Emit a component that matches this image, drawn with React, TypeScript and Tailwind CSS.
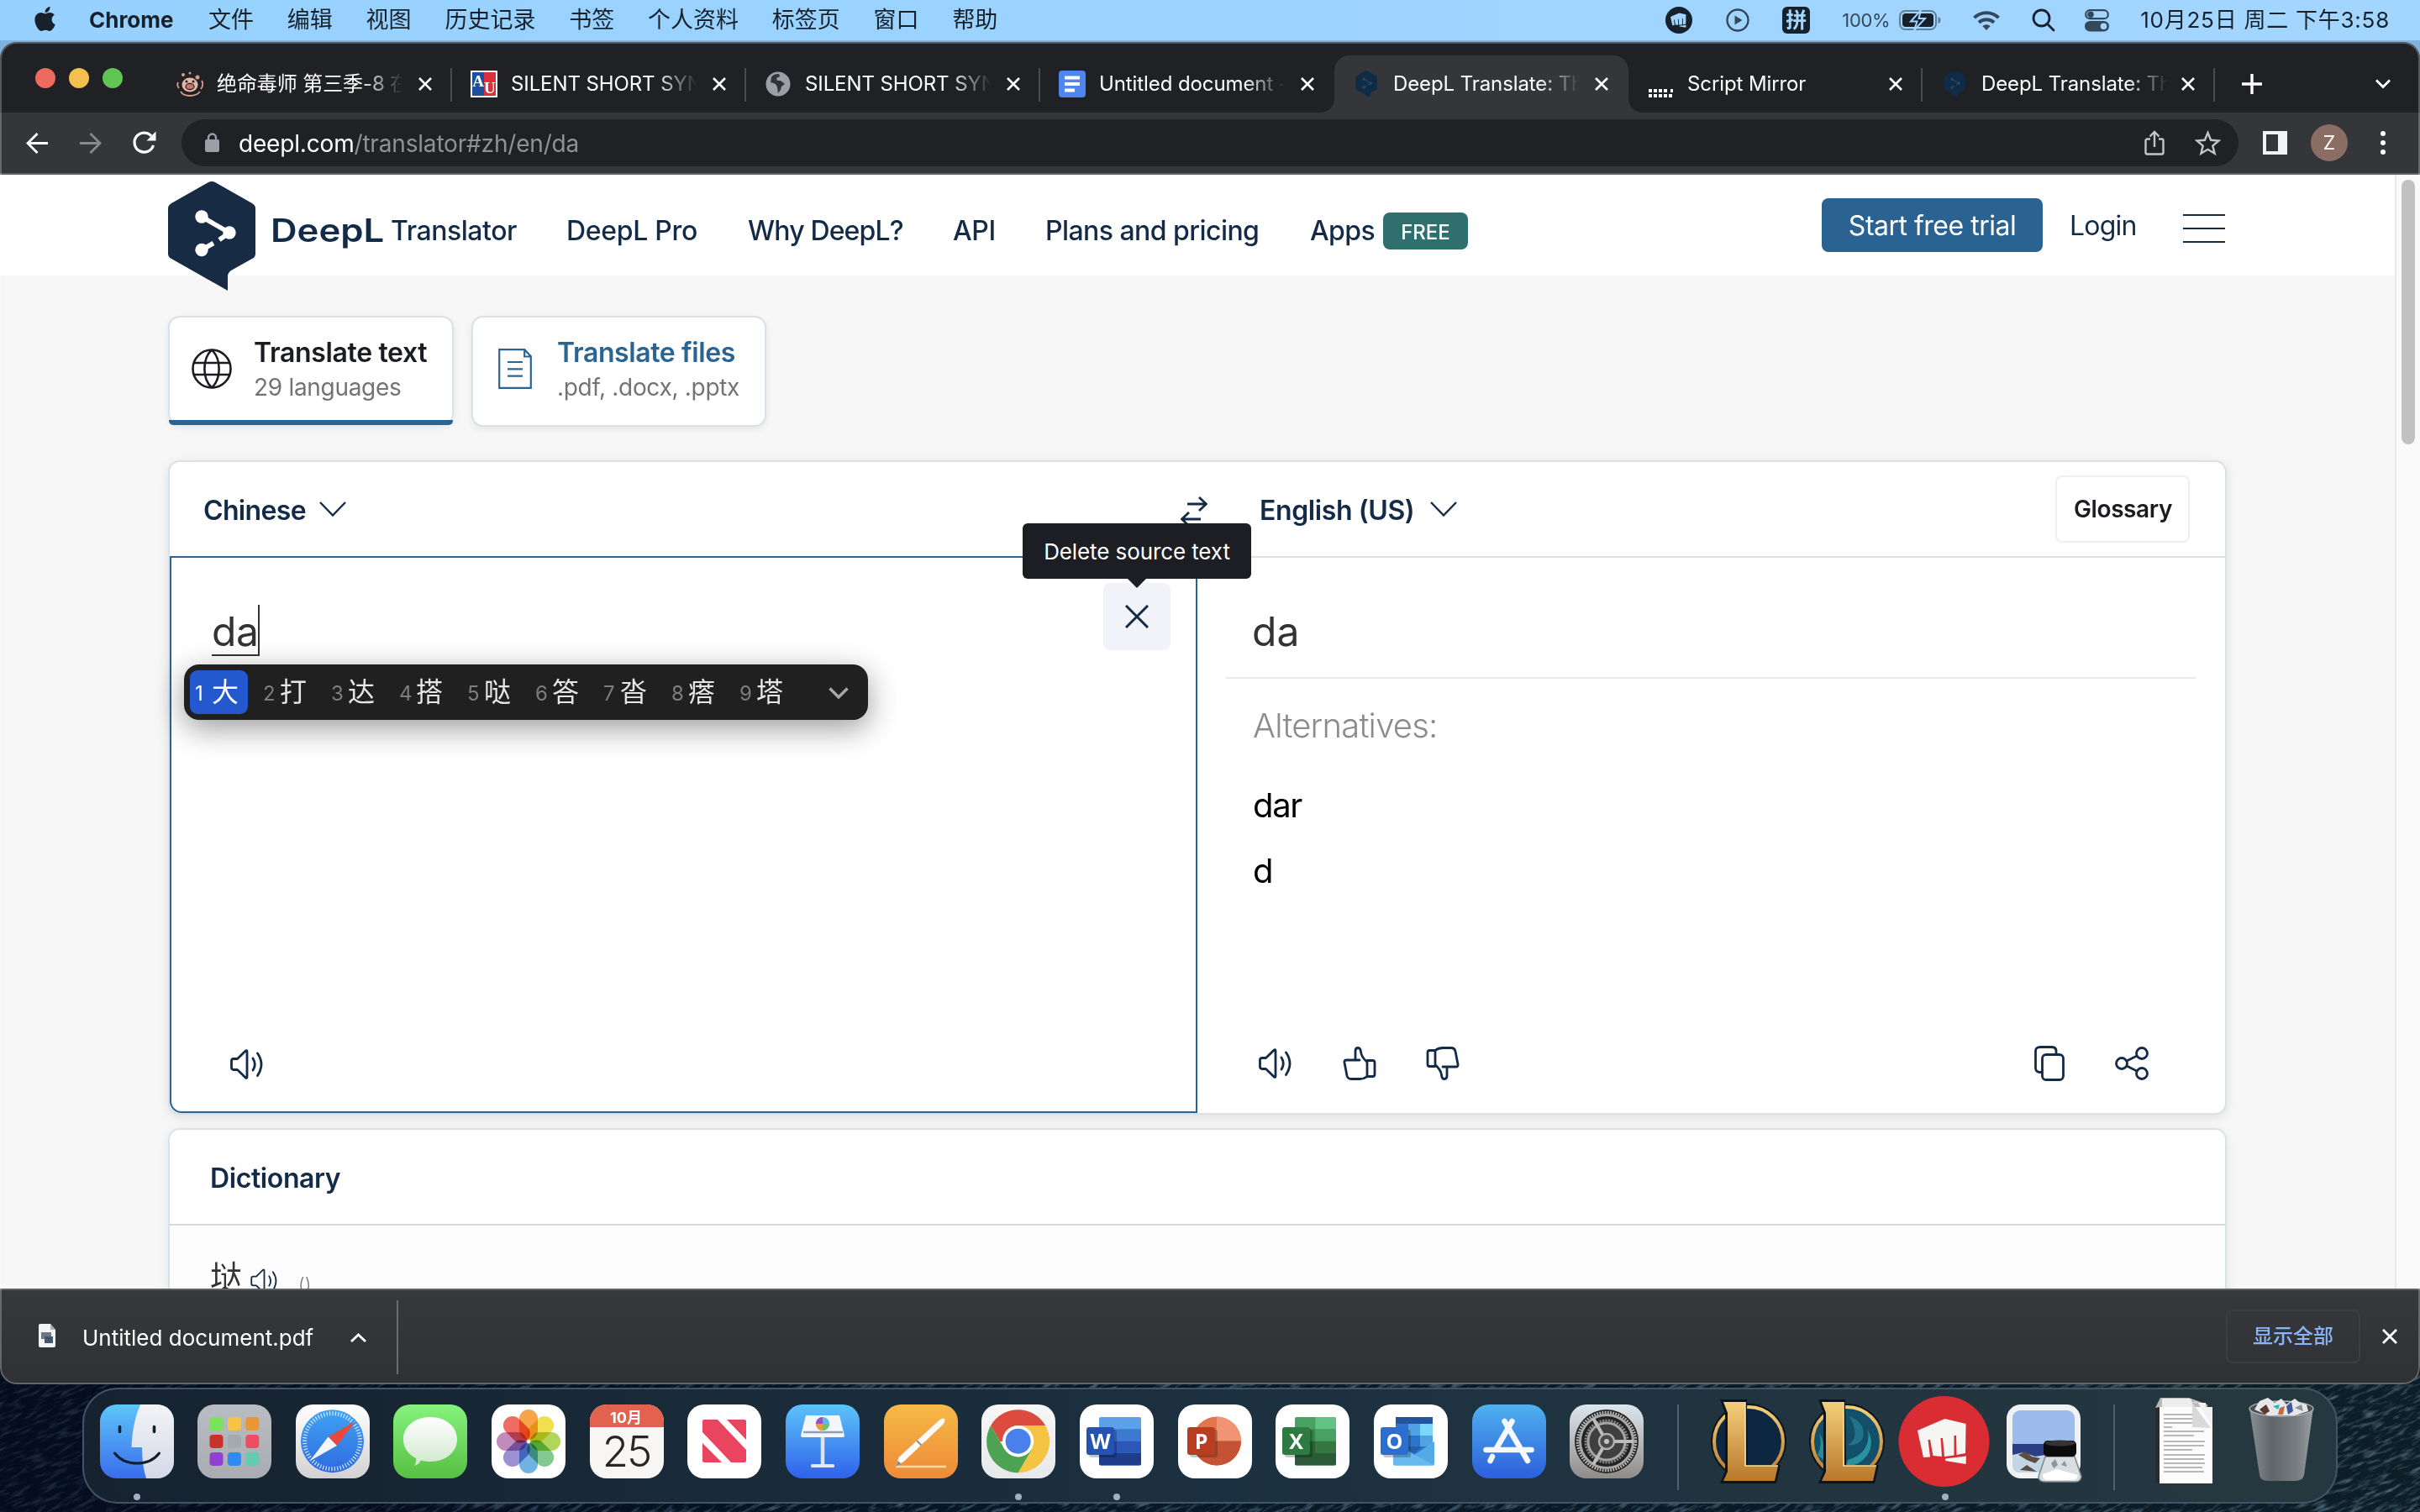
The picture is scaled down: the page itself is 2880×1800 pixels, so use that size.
import React from "react";
import { FaApple } from "react-icons/fa";

type Kids = { children?: React.ReactNode };

/* ---------- macOS menu bar ---------- */

const MENUS = ["文件", "编辑", "视图", "历史记录", "书签", "个人资料", "标签页", "窗口", "帮助"];

function FistShape({ fill }: { fill: string }) {
  return (
    <g fill={fill}>
      <path d="M11 31 L43.5 17 L68.6 23 L68 58 L57.5 60 L57 37 L54.5 37 L54.5 60.5 L43 62 L41 40 L38.5 40 L40 62 L29.5 61 L26 42 L23.5 42 L26 62.5 L18 63 Z" />
      <path d="M44 64.5 L69 61.5 L68.5 71 L44 67 Z" />
    </g>
  );
}

function MenuBar() {
  return (
    <div className="flex h-12 shrink-0 items-center bg-linear-to-r from-[#96d1ff] to-[#a3d6ff] text-[27px] leading-none whitespace-nowrap text-[#16212b]">
      <FaApple className="mb-1 ml-[37px] size-[33px]" />
      <span className="ml-[36px] w-[142px] text-[26px] font-bold">Chrome</span>
      <div className="mb-px flex gap-[39.800px]">
        {MENUS.map((m) => (
          <span key={m}>{m}</span>
        ))}
      </div>
      <div className="ml-auto flex items-center">
        <svg className="size-8" viewBox="0 0 32 32">
          <circle cx="16" cy="16" r="16" fill="#16212b" />
          <g transform="translate(2.5 2) scale(.32)"><FistShape fill="#a0d5ff" /></g>
        </svg>
        <svg className="ml-[40px] size-7" viewBox="0 0 28 28" fill="none" stroke="#33495b" strokeWidth="2.4">
          <circle cx="14" cy="14" r="12.5" />
          <path d="M10.500 8.500v11l9-5.500z" fill="#33495b" stroke="none" />
        </svg>
        <span className="ml-[39px] flex h-8 w-[33px] items-center justify-center rounded-[6px] bg-[#16212b] text-[25px] font-bold text-[#a3d6ff]">拼</span>
        <span className="ml-[38px] w-[68px] text-[22px] tracking-[-0.3px] text-[#33495b]">100%</span>
        <svg className="h-6 w-[50px]" viewBox="0 0 50 24">
          <rect x="1" y="1" width="43" height="22" rx="6.500" fill="none" stroke="#5f7f97" strokeWidth="2" />
          <rect x="4" y="4" width="37" height="16" rx="4" fill="#16212b" />
          <path d="M46.500 8q3 1 3 4t-3 4z" fill="#5f7f97" />
          <path d="M26 0L14 13.500h7.500L18 24L31 10h-7.500z" fill="#16212b" stroke="#a3d6ff" strokeWidth="2" />
        </svg>
        <svg className="ml-[38px] h-[25px] w-8" viewBox="0 0 32 25" fill="none" stroke="#33495b" strokeWidth="4">
          <path d="M1.500 9.200a20.500 20.500 0 0 1 29 0" />
          <path d="M7 14.800a13 13 0 0 1 18 0" />
          <path d="M16 24l-4.600-4.900a6.600 6.600 0 0 1 9.200 0z" fill="#33495b" stroke="none" />
        </svg>
        <svg className="ml-[38px] size-7" viewBox="0 0 28 28" fill="none" stroke="#16212b" strokeWidth="2.800">
          <circle cx="11.500" cy="11.500" r="9.500" />
          <path d="M18.500 18.500l7.500 7.500" strokeLinecap="round" />
        </svg>
        <svg className="ml-[35px] h-[27px] w-[29px]" viewBox="0 0 29 27">
          <rect x="1.200" y="1.200" width="26.600" height="10" rx="5" fill="none" stroke="#33495b" strokeWidth="2.200" />
          <circle cx="7" cy="6.200" r="3.800" fill="#33495b" />
          <rect x="0" y="14" width="29" height="12.500" rx="6.200" fill="#33495b" />
          <circle cx="22.500" cy="20.200" r="3.800" fill="#a3d6ff" />
        </svg>
        <span className="mr-[36px] ml-[37px] text-[26px] tracking-[0.75px]">10月25日 周二 下午3:58</span>
      </div>
    </div>
  );
}

/* ---------- Chrome tab strip ---------- */

function CloseIcon({ className = "" }: { className?: string }) {
  return (
    <svg className={"size-4 shrink-0 " + className} viewBox="0 0 16 16" stroke="currentColor" strokeWidth="2.600">
      <path d="M1 1l14 14M15 1L1 15" />
    </svg>
  );
}

const DEEPL_SHAPE = "M48 1Q52 -1 56 1L100 26Q104 28.500 104 32V86Q104 90 100 92L75 106Q71 109 71 113V130L4 92Q0 90 0 86V32Q0 28.500 4 26Z";

function DeepLMark({ className, fill, ink }: { className: string; fill: string; ink: string }) {
  return (
    <svg className={className} viewBox="0 0 104 130">
      <path d={DEEPL_SHAPE} fill={fill} />
      <path d="M40 42L73 61L61 69.500M54 73.500L40 81.500" stroke={ink} strokeWidth="5.500" fill="none" />
      <circle cx="40" cy="42" r="7.700" fill={ink} />
      <circle cx="73" cy="61" r="7.700" fill={ink} />
      <circle cx="40" cy="81.500" r="7.700" fill={ink} />
    </svg>
  );
}

const favicons: Record<string, React.ReactNode> = {
  pig: (
    <svg className="size-8" viewBox="0 0 32 32" fill="none" stroke="#d99b90" strokeWidth="1.800">
      <path d="M2 14q-2 4 1 7M30 12q3 5-1 10M5 25q3 5 11 5t12-5" />
      <ellipse cx="16" cy="17" rx="9.500" ry="8.500" fill="#e8b3a8" stroke="none" />
      <ellipse cx="16" cy="19" rx="5" ry="3.600" fill="#c47a72" stroke="#202124" strokeWidth="1.200" />
      <circle cx="12" cy="13" r="1.500" fill="#202124" stroke="none" />
      <circle cx="20" cy="13" r="1.500" fill="#202124" stroke="none" />
      <circle cx="8" cy="5" r="2" fill="#d99b90" stroke="none" />
      <circle cx="16" cy="3" r="1.500" fill="#d99b90" stroke="none" />
      <circle cx="25" cy="8" r="2.500" fill="#d99b90" stroke="none" />
    </svg>
  ),
  au: (
    <span className="flex size-8 items-center justify-center border-2 border-white bg-linear-to-r from-[#1d4f9f] from-50% to-[#dc2f3c] to-50% font-['Liberation_Serif'] font-bold text-white">
      <span className="mb-2 text-[19px] leading-none">A</span>
      <span className="mt-2 text-[19px] leading-none">U</span>
    </span>
  ),
  globe: (
    <svg className="size-8" viewBox="0 0 32 32">
      <circle cx="16" cy="16" r="14.500" fill="#9aa0a6" />
      <path d="M17 4q-7 0-9 4l-1 7 6 1 2 4 1 7 3-4 1-4 4-3-5-4h-4l-1-3 4-2z" fill="#202124" opacity=".85" />
      <path d="M4 15q5-2 8 1t3 6-4 3-7-10z" fill="#9aa0a6" />
    </svg>
  ),
  docs: (
    <svg className="size-8" viewBox="0 0 32 32">
      <rect width="32" height="32" rx="4" fill="#4f86ee" />
      <path d="M7 8.500h18M7 16h18M7 23.500h12" stroke="#fff" strokeWidth="4" />
    </svg>
  ),
  deepl: <span className="flex w-8 justify-center"><DeepLMark className="h-8 w-[26px]" fill="#0f2b46" ink="#28435f" /></span>,
  script: (
    <svg className="h-8 w-8" viewBox="0 0 32 32" fill="#fff">
      {[2, 8, 14, 20].map((x) => <rect key={x} x={x} y="22" width="4" height="4" />)}
      <rect x="28" y="22" width="3" height="4" />
      {[2, 8, 14, 20, 26].map((x) => <rect key={x} x={x} y="28" width="4" height="4" />)}
    </svg>
  ),
};

const TABS: { icon: string; title: string; active?: boolean; sep?: boolean }[] = [
  { icon: "pig", title: "绝命毒师 第三季-8 在线", sep: true },
  { icon: "au", title: "SILENT SHORT SYNOPSIS", sep: true },
  { icon: "globe", title: "SILENT SHORT SYNOPSIS", sep: true },
  { icon: "docs", title: "Untitled document - Google" },
  { icon: "deepl", title: "DeepL Translate: The world", active: true },
  { icon: "script", title: "Script Mirror", sep: true },
  { icon: "deepl", title: "DeepL Translate: The world", sep: true },
];

function TabStrip() {
  return (
    <div className="flex h-[84px] items-end bg-[#202124] text-white">
      <div className="flex h-[68px] w-[188px] items-center gap-4 pb-[14px] pl-[42px]">
        <span className="size-6 rounded-full bg-[#ed6a5e]" />
        <span className="size-6 rounded-full bg-[#f5bf4f]" />
        <span className="size-6 rounded-full bg-[#61c554]" />
      </div>
      {TABS.map((t, i) => (
        <div
          key={i}
          className={
            "relative flex h-[68px] shrink-0 items-center pl-[22px] " +
            (t.active ? "rounded-t-[18px] bg-[#35363a] " : "") +
            (i === TABS.length - 1 ? "w-[348px]" : "w-[350px]")
          }
        >
          {favicons[t.icon]}
          <span className="ml-4 w-[226px] overflow-hidden mask-r-from-76% mask-r-to-98% text-[24px] leading-[40px] tracking-[-0.1px] whitespace-nowrap">
            {t.title}
          </span>
          <CloseIcon className={i === TABS.length - 1 ? "ml-[12px]" : "ml-[14px]"} />
          {t.sep && <span className="absolute top-[15px] right-0 h-10 w-[2px] bg-[#4a4c50]" />}
          {t.active && (
            <>
              <span className="absolute bottom-0 -left-4 size-4 bg-[radial-gradient(circle_at_0_0,transparent_15.5px,#35363a_16px)]" />
              <span className="absolute -right-4 bottom-0 size-4 bg-[radial-gradient(circle_at_100%_0,transparent_15.5px,#35363a_16px)]" />
            </>
          )}
        </div>
      ))}
      <div className="flex h-[68px] flex-1 items-center justify-between pr-[35px] pl-[32px]">
        <svg className="size-6" viewBox="0 0 24 24" stroke="#fff" strokeWidth="3.400">
          <path d="M12 0v24M0 12h24" />
        </svg>
        <svg className="h-3 w-[18px]" viewBox="0 0 18 12" stroke="#fff" strokeWidth="2.800" fill="none">
          <path d="M1 1.500l8 8 8-8" />
        </svg>
      </div>
    </div>
  );
}

function Toolbar() {
  return (
    <div className="flex h-[74px] items-center border-b-2 border-[#5f6064] bg-[#35363a] text-white">
      <svg className="ml-[31px] size-[27px]" viewBox="0 0 27 27" fill="none" stroke="#fff" strokeWidth="2.800">
        <path d="M26 13.500H2.500M13.500 2L2 13.500 13.500 25" />
      </svg>
      <svg className="ml-9 size-[27px]" viewBox="0 0 27 27" fill="none" stroke="#88898c" strokeWidth="2.800">
        <path d="M1 13.500h23.500M13.500 2L25 13.500 13.500 25" />
      </svg>
      <svg className="ml-9 size-[30px]" viewBox="0 0 30 30" fill="none" stroke="#fff" strokeWidth="3.200">
        <path d="M25.500 18A11.500 11.500 0 1 1 23 6.800" />
        <path d="M28.500 1.500v11h-11z" fill="#fff" stroke="none" />
      </svg>
      <div className="ml-[29px] flex h-14 w-[2448px] items-center rounded-full bg-[#202124] pl-7">
        <svg className="h-6 w-[17px]" viewBox="0 0 17 24">
          <rect x="0" y="8" width="17" height="15" rx="2" fill="#9aa0a6" />
          <path d="M4 9V6a4.500 4.500 0 0 1 9 0v3" fill="none" stroke="#9aa0a6" strokeWidth="2.400" />
        </svg>
        <span className="mt-px ml-[23px] text-[28px] leading-10 tracking-[-0.18px] text-[#8f9194]">
          <span className="text-white">deepl.com</span>/translator#zh/en/da
        </span>
        <svg className="ml-auto h-[30px] w-6" viewBox="0 0 24 30" fill="none" stroke="#c3c5c8" strokeWidth="2.400">
          <path d="M7 10.500H3.500Q1.500 10.500 1.500 12.500v14q0 2 2 2h17q2 0 2-2v-14q0-2-2-2H17M12 20V2M6.500 7.500L12 2l5.500 5.500" />
        </svg>
        <svg className="mr-[21px] ml-9 size-[31px]" viewBox="0 0 31 31" fill="none" stroke="#c3c5c8" strokeWidth="2.400">
          <path d="M15.500 3l3.600 8.800 9.400.7-7.200 6.100 2.300 9.200-8.100-5-8.100 5 2.300-9.200-7.200-6.100 9.400-.7z" />
        </svg>
      </div>
      <svg className="ml-[29px] h-7 w-[29px]" viewBox="0 0 29 28">
        <path fillRule="evenodd" d="M0 0h29v28H0zM4 4v20h14V4z" fill="#f1f3f4" />
      </svg>
      <span className="ml-[28px] flex size-11 items-center justify-center rounded-full bg-[#8a6e64] text-[23px]">Z</span>
      <span className="ml-[39px] flex flex-col gap-[5px]">
        <i className="size-[6px] rounded-full bg-white" />
        <i className="size-[6px] rounded-full bg-white" />
        <i className="size-[6px] rounded-full bg-white" />
      </span>
    </div>
  );
}

/* ---------- DeepL page ---------- */

function Chevron() {
  return (
    <svg className="h-[18px] w-8" viewBox="0 0 32 18" fill="none" stroke="#142b47" strokeWidth="2.400">
      <path d="M1 1l15 15.500L31 1" />
    </svg>
  );
}

function Speaker({ className = "h-9 w-10", sw = 2.8 }: { className?: string; sw?: number }) {
  return (
    <svg className={className} viewBox="0 0 40 36" fill="none" stroke="#142b47" strokeWidth={sw} strokeLinecap="round" strokeLinejoin="round">
      <path d="M4 11.500h4.500L18 2.200q2-1.500 2 .8v30q0 2.300-2 .8L8.500 24.500H4q-2.500 0-2.500-2.500v-8q0-2.500 2.500-2.500z" />
      <path d="M27 11q4.500 7 0 14M32.500 5q9 13 0 26.500" />
    </svg>
  );
}

function Thumb({ className = "" }: { className?: string }) {
  return (
    <svg className={"size-10 " + className} viewBox="0 0 40 40" fill="none" stroke="#142b47" strokeWidth="2.800" strokeLinejoin="round" strokeLinecap="round">
      <path d="M20 16H4.500Q1.500 16 2 19L5 34.500Q6 38.500 10 38.500H20Q25 38.500 29 35.500V18.500Q22 12 21.500 6Q21 1.500 18 1.500Q15 1.500 15 5.500V16" />
      <path d="M29 16.500h6.500q2.500 0 2.500 2.500v14q0 2.500-2.500 2.500H29" />
    </svg>
  );
}

function SiteHeader() {
  return (
    <header className="h-[120px] bg-white pl-[200px] text-[#142b47]">
      <div className="flex h-[120px] items-start">
        <DeepLMark className="mt-2 h-[130px] w-[104px]" fill="#172b45" ink="#ffffff" />
        <nav className="flex h-[134px] items-center text-[32px] leading-10 font-medium whitespace-nowrap">
          <span className="ml-[18px] w-[143px]">
            <span className="inline-block origin-left scale-x-[1.15] text-[38px] font-semibold">DeepL</span>
          </span>
          <span className="w-[209px] tracking-[-0.45px]">Translator</span>
          <span className="w-[216px] tracking-[-0.3px]">DeepL Pro</span>
          <span className="w-[244px] tracking-[-0.85px]">Why DeepL?</span>
          <span className="w-[110px] tracking-[-0.4px]">API</span>
          <span className="w-[315px] tracking-[-0.55px]">Plans and pricing</span>
          <span className="w-[87px] tracking-[-0.6px]">Apps</span>
          <span className="flex h-11 w-[101px] items-center justify-center rounded-[8px] bg-[#2f6f6e] pt-[3px] text-[24px] font-medium text-white">FREE</span>
        </nav>
        <div className="mt-7 ml-auto flex h-16 items-center text-[32px] whitespace-nowrap">
          <span className="flex h-16 w-[263px] items-center justify-center rounded-[8px] bg-[#2a6291] pt-[2px] tracking-[-0.5px] text-white">Start free trial</span>
          <span className="mt-[2px] ml-[32px] w-[135px] tracking-[-0.8px]">Login</span>
          <span className="mt-[7px] mr-[202px] flex flex-col gap-[14px]">
            <i className="h-[2px] w-[50px] bg-[#142b47]" />
            <i className="h-[2px] w-[50px] bg-[#142b47]" />
            <i className="h-[2px] w-[50px] bg-[#142b47]" />
          </span>
        </div>
      </div>
    </header>
  );
}

function ModeCards() {
  return (
    <div className="mt-12 flex items-start gap-[21px] pl-[200px] whitespace-nowrap">
      <div className="relative flex h-[130px] w-[340px] items-center rounded-[14px] border-2 border-[#dae1e8] bg-white pl-[26px] shadow-[0_3px_8px_rgba(0,0,0,0.08)]">
        <svg className="mb-[5px] size-12" viewBox="0 0 48 48" fill="none" stroke="#1b1c21" strokeWidth="2.600">
          <circle cx="24" cy="24" r="22.500" />
          <path d="M3 17h42M3 31h42M24 1.500C12.500 12 12.500 36 24 46.500M24 1.500C35.500 12 35.500 36 24 46.500" />
        </svg>
        <div className="mb-[2px] ml-[26px]">
          <div className="text-[32px] leading-10 font-semibold tracking-[-0.35px] text-[#1b1c21]">Translate text</div>
          <div className="mt-[2px] text-[28px] leading-[38px] tracking-[-0.3px] text-[#737373]">29 languages</div>
        </div>
        <span className="absolute -inset-x-[1px] -bottom-[2px] h-[6px] rounded-b-[5px] bg-[#2a6492]" />
      </div>
      <div className="flex h-[132px] w-[351px] items-center rounded-[14px] border-2 border-[#dae1e8] bg-white pl-[30px] shadow-[0_3px_8px_rgba(0,0,0,0.08)]">
        <svg className="mb-[6px] h-12 w-10" viewBox="0 0 40 48" fill="none" stroke="#2a6492" strokeWidth="2.200">
          <path d="M1.200 1.200h30l7.600 8V46.800H1.200zM31.200 1.200v8.300h7.600M11 16h18M11 24.300h18M11 32.700h18" />
        </svg>
        <div className="mb-[4px] ml-[30px]">
          <div className="text-[32px] leading-10 font-semibold tracking-[-0.4px] text-[#2a6492]">Translate files</div>
          <div className="mt-[2px] text-[28px] leading-[38px] tracking-[-0.3px] text-[#737373]">.pdf, .docx, .pptx</div>
        </div>
      </div>
    </div>
  );
}

const CANDIDATES = ["大", "打", "达", "搭", "哒", "答", "沓", "瘩", "塔"];

function InputCandidates() {
  return (
    <div className="absolute top-[127px] left-[15px] z-20 flex h-[66px] w-[814px] items-center rounded-[18px] bg-[#202020] pl-[7px] shadow-[0_10px_36px_rgba(0,0,0,0.4)]">
      {CANDIDATES.map((c, i) => (
        <span
          key={c}
          className={
            "mr-3 flex h-[52px] w-[69px] items-center rounded-[9px] pl-[6px] " +
            (i === 0 ? "bg-[#2358cf] text-white" : "text-[#e6e6e6]")
          }
        >
          <span className={"mt-[3px] w-5 text-[24px] " + (i === 0 ? "text-white" : "text-[#7d7d7d]")}>{i + 1}</span>
          <span className="mb-px text-[32px] leading-none">{c}</span>
        </span>
      ))}
      <svg className="mt-[2px] ml-[31px] h-[14px] w-6" viewBox="0 0 24 14" fill="none" stroke="#a8a8a8" strokeWidth="3.400">
        <path d="M1.500 1.500L12 12 22.500 1.500" />
      </svg>
    </div>
  );
}

function SourcePanel() {
  return (
    <div className="relative -mt-[2px] flex w-[1223px] flex-col rounded-bl-[14px] border-2 border-[#2a6492] bg-white">
      <div className="flex items-start justify-between">
        <span className="mt-[56px] ml-[48px] h-[61px] w-[57px] border-r-[2px] border-b-[2px] border-[#333] text-[48px] leading-[64px] tracking-[-0.5px] text-[#333]">da</span>
        <button className="mt-[30px] mr-[30px] flex size-20 items-center justify-center rounded-[8px] bg-[#f2f3f8]">
          <svg className="size-7" viewBox="0 0 28 28" stroke="#142b47" strokeWidth="3">
            <path d="M1 1l26 26M27 1L1 27" />
          </svg>
        </button>
      </div>
      <div className="absolute -top-[41px] left-[1013px] z-30 flex h-[66px] w-[272px] items-center justify-center rounded-[6px] bg-[#1d1e24] text-[26px] tracking-[-0.1px] text-white">
        Delete source text
        <span className="absolute top-full left-1/2 -ml-[11px] border-x-[11px] border-t-[11px] border-x-transparent border-t-[#1d1e24]" />
      </div>
      <InputCandidates />
      <div className="mt-auto mb-[38px] ml-[70px]">
        <Speaker />
      </div>
    </div>
  );
}

function TargetPanel() {
  return (
    <div className="flex flex-1 flex-col pl-[34px]">
      <div className="mr-[35px] flex h-[144px] items-center border-b-2 border-[#e9e9e9] pt-[33px] pl-[31px] text-[48px] text-[#333]">da</div>
      <div className="mt-[31px] pl-8 text-[40px] leading-[50px] font-light tracking-[-0.8px] text-[#8b8b8b]">Alternatives:</div>
      <div className="mt-[45px] pl-8 text-[40px] leading-[50px] tracking-[-1.3px] text-black">dar</div>
      <div className="mt-[28px] pl-8 text-[40px] leading-[50px] text-black">d</div>
      <div className="mt-auto mb-[38px] flex items-center pr-[91px] pl-[39px]">
        <Speaker />
        <Thumb className="ml-[60px]" />
        <Thumb className="ml-[59px] rotate-180" />
        <svg className="ml-auto h-[42px] w-9" viewBox="0 0 36 42" fill="none" stroke="#142b47" strokeWidth="2.800">
          <rect x="9.500" y="10.500" width="25" height="30" rx="4.500" />
          <path d="M9.500 31.500H7q-5.500 0-5.500-5V6.500q0-5 5.500-5h14q5 0 5 5v4" />
        </svg>
        <svg className="ml-[60px] size-10" viewBox="0 0 40 40" fill="none" stroke="#142b47" strokeWidth="2.800">
          <circle cx="8" cy="20" r="6.500" />
          <circle cx="32" cy="8" r="6.500" />
          <circle cx="32" cy="32" r="6.500" />
          <path d="M14 17l12-6M14 23l12 6" />
        </svg>
      </div>
    </div>
  );
}

function TranslatorCard() {
  return (
    <section className="mt-10 ml-[200px] flex h-[779px] w-[2450px] flex-col rounded-[14px] border-2 border-[#dae1e8] bg-white shadow-[0_3px_14px_rgba(0,0,0,0.1)]">
      <div className="flex h-[114px] shrink-0 items-center border-b-2 border-[#dae1e8] text-[32px] font-semibold whitespace-nowrap text-[#142b47]">
        <span className="mt-[3px] ml-[40px] w-[138px] tracking-[-0.65px]">Chinese</span>
        <Chevron />
        <svg className="mt-[3px] ml-[993px] h-9 w-8" viewBox="0 0 32 36" fill="none" stroke="#142b47" strokeWidth="2.800">
          <path d="M8 10h22M22 2l8.500 8L22 18M24 28H2M10 20l-8.500 8L10 36" />
        </svg>
        <span className="mt-[3px] ml-[62px] w-[203px] tracking-[-0.4px]">English (US)</span>
        <Chevron />
        <span className="mr-[42px] ml-auto flex h-20 w-[160px] items-center justify-center rounded-[8px] border-2 border-[#eceff3] pl-px text-[28px] tracking-[-0.4px] text-[#1b1c21]">
          Glossary
        </span>
      </div>
      <div className="flex flex-1">
        <SourcePanel />
        <TargetPanel />
      </div>
    </section>
  );
}

function DictionaryCard() {
  return (
    <section className="mt-4 ml-[200px] h-[240px] w-[2450px] rounded-t-[14px] border-2 border-[#dae1e8] bg-[#fdfdfd] shadow-[0_3px_14px_rgba(0,0,0,0.08)]">
      <div className="flex h-[114px] items-center rounded-t-[12px] border-b-2 border-[#d5dae1] bg-white pt-[3px] pl-12 text-[32px] font-semibold tracking-[-0.4px] text-[#142b47]">
        Dictionary
      </div>
      <div className="flex items-start pl-12">
        <span className="mt-[39px] text-[38px] leading-[44px] text-[#333]">垯</span>
        <span className="mt-[51px] ml-[10px]"><Speaker className="h-[30px] w-[33px]" sw={2.2} /></span>
        <span className="mt-[54px] ml-[24px] text-[22px] leading-8 font-light text-[#777]">()</span>
      </div>
    </section>
  );
}

function DownloadBar() {
  return (
    <div className="flex h-[114px] shrink-0 items-center border-t-2 border-[#5f6064] bg-linear-to-b from-[#37383c] to-[#303134] text-white">
      <svg className="mb-[5px] ml-[46px] h-7 w-5" viewBox="0 0 20 28">
        <path d="M0 2q0-2 2-2h12l6 7v19q0 2-2 2H2q-2 0-2-2z" fill="#f1f3f4" />
        <path d="M14 0v7h6z" fill="#a9adb3" />
        <rect x="3" y="10" width="12" height="8" fill="#6d7785" />
        <rect x="7" y="15" width="10" height="8" fill="#44566b" />
      </svg>
      <span className="ml-[32px] w-[319px] text-[26px]">Untitled document.pdf</span>
      <svg className="h-[11px] w-[19px]" viewBox="0 0 19 11" fill="none" stroke="#fff" strokeWidth="2.800">
        <path d="M1 10l8.500-8 8.500 8" />
      </svg>
      <span className="ml-[36px] h-[88px] w-[2px] bg-[#6b6c6f]" />
      <span className="mb-[3px] ml-auto flex h-16 w-[160px] items-center justify-center rounded-[8px] border-2 border-[#3d3e42] text-[24px] font-medium text-[#8ab4f8]">显示全部</span>
      <svg className="mb-[2px] mr-[27px] ml-[26px] size-[18px]" viewBox="0 0 18 18" stroke="#fff" strokeWidth="2.800">
        <path d="M1 1l16 16M17 1L1 17" />
      </svg>
    </div>
  );
}

function BrowserWindow() {
  return (
    <div className="relative flex h-[1598px] flex-col overflow-hidden rounded-[20px]">
      <TabStrip />
      <Toolbar />
      <div className="flex h-[1326px] shrink-0 overflow-hidden bg-[#f7f7f7]">
        <div className="w-[2850px] shrink-0">
          <SiteHeader />
          <ModeCards />
          <TranslatorCard />
          <DictionaryCard />
        </div>
        <div className="w-[30px] border-l-2 border-[#e8e8e8] bg-[#fafafa] pt-[6px] pl-[6px]">
          <div className="h-[315px] w-4 rounded-full bg-[#c1c1c1]" />
        </div>
      </div>
      <DownloadBar />
      <div className="pointer-events-none absolute inset-0 rounded-[20px] border-2 border-white/25" />
    </div>
  );
}

/* ---------- Dock ---------- */

const TILE = <rect width="88" height="88" rx="20" fill="#fff" />;

function Grad({ id, from, to }: { id: string; from: string; to: string }) {
  return (
    <linearGradient id={id} x1="0" y1="0" x2="0" y2="1">
      <stop offset="0" stopColor={from} />
      <stop offset="1" stopColor={to} />
    </linearGradient>
  );
}

function Tile({ id, from, to }: { id: string; from: string; to: string }) {
  return (
    <>
      <defs><Grad id={id} from={from} to={to} /></defs>
      <rect width="88" height="88" rx="20" fill={`url(#${id})`} />
    </>
  );
}

function OfficeBadge({ letter, x, fill }: { letter: string; x: number; fill: string }) {
  return (
    <>
      <rect x={x + 3} y="30" width="33" height="33" rx="3" fill="#000" opacity=".22" />
      <rect x={x} y="27" width="33" height="33" rx="3" fill={fill} />
      <text x={x + 16.5} y="52.500" textAnchor="middle" fontSize="25" fontWeight="700" fill="#fff" fontFamily="'Open Sans', sans-serif">{letter}</text>
    </>
  );
}

const PETALS = ["#f5952b", "#efdb2f", "#a5ce3f", "#6cbf7d", "#57a5e0", "#8a7cc9", "#b678b2", "#ee5146"];

function LeagueIcon({ fill, id, children }: { fill: string; id: string } & Kids) {
  return (
    <>
      <defs>
        <Grad id={id} from="#f4cf79" to="#b8782c" />
      </defs>
      <circle cx="43" cy="44" r="45" fill="#0b141d" />
      <circle cx="43" cy="44" r="41" fill={fill} stroke={`url(#${id})`} strokeWidth="4" />
      {children}
      <path d="M9 -6H41L42 72H81L76 94H9L15 80V10Z" fill="#0b141d" />
      <path d="M13 -3H39L40 73H78L74 91H13L18 80V10Z" fill={`url(#${id})`} />
      <path d="M39 -3V73H78" fill="none" stroke="#fbe3a0" strokeWidth="1.500" />
    </>
  );
}

const DOCK_APPS: { name: string; running?: boolean; art: React.ReactNode }[] = [
  {
    name: "finder", running: true,
    art: (
      <>
        <defs>
          <clipPath id="fc"><rect width="88" height="88" rx="20" /></clipPath>
          <Grad id="fr" from="#f3f3f6" to="#d3d9e6" />
        </defs>
        <Tile id="fl" from="#5ec6f8" to="#3a6cec" />
        <path d="M48 0C42 14 38 32 37.500 51H50C50 66 52 78 55 88H88V0Z" fill="url(#fr)" clipPath="url(#fc)" />
        <path d="M23.500 26.500v6M64.500 26.500v6" stroke="#10202e" strokeWidth="3.600" strokeLinecap="round" />
        <path d="M17.500 58C30 74 58 74 70.500 58" stroke="#10202e" strokeWidth="3" fill="none" strokeLinecap="round" />
      </>
    ),
  },
  {
    name: "launchpad",
    art: (
      <>
        <Tile id="lp" from="#b9bdc3" to="#a9acb1" />
        {["#7be35a", "#f6c342", "#ea9636", "#c9322a", "#a3a9ad", "#ec4f63", "#8f42d2", "#2f8bf2", "#62cdae"].map((c, i) => (
          <rect key={c} x={14.500 + (i % 3) * 21.400} y={15 + Math.floor(i / 3) * 21} width="16" height="16" rx="4" fill={c} />
        ))}
      </>
    ),
  },
  {
    name: "safari",
    art: (
      <>
        <Tile id="sf" from="#ffffff" to="#d2d2d4" />
        <defs><Grad id="sb" from="#3fa4f2" to="#2f6ae0" /></defs>
        <circle cx="43.500" cy="43.700" r="37.500" fill="url(#sb)" />
        <circle cx="43.500" cy="43.700" r="33" fill="none" stroke="#e4f0fc" strokeWidth="5" strokeDasharray="1.100 2.350" />
        <path d="M71 20L38.500 38.500 49 49z" fill="#e9483d" />
        <path d="M17 67L38.500 38.500 49 49z" fill="#f3f5f8" />
      </>
    ),
  },
  {
    name: "messages",
    art: (
      <>
        <Tile id="ms" from="#86f37e" to="#57c043" />
        <defs><Grad id="mb" from="#ffffff" to="#cfe8cb" /></defs>
        <path d="M44 15C62 15 76 26 76 41.500S62 68 44 68Q38 68 33 66.500Q30 71.500 25 73Q28 69 27 64Q12 56 12 41.500C12 26 26 15 44 15Z" fill="url(#mb)" />
      </>
    ),
  },
  {
    name: "photos",
    art: (
      <>
        {TILE}
        {PETALS.map((c, i) => (
          <rect key={c} x="33" y="6" width="22" height="36" rx="11" fill={c} opacity=".85" transform={`rotate(${i * 45} 44 44)`} className="mix-blend-multiply" />
        ))}
      </>
    ),
  },
  {
    name: "calendar",
    art: (
      <>
        <defs><clipPath id="cc"><rect width="88" height="88" rx="20" /></clipPath></defs>
        <rect width="88" height="88" rx="20" fill="#f7f6f5" />
        <rect width="88" height="27" fill="#e2614f" clipPath="url(#cc)" />
        <text x="43" y="21.500" textAnchor="middle" fontSize="18" fontWeight="700" fill="#fff" fontFamily="Inter, 'Noto Sans CJK SC', sans-serif">10月</text>
        <text x="43.500" y="74" textAnchor="middle" fontSize="51" fontWeight="300" letterSpacing="-2" fill="#262626" fontFamily="Inter, sans-serif">25</text>
      </>
    ),
  },
  {
    name: "news",
    art: (
      <>
        {TILE}
        <g fill="#ea4560">
          <path d="M20 18H36L70 54V67Q70 69 68 69H52L18 33V20Q18 18 20 18Z" />
          <path d="M47 18H68Q70 18 70 20V42Z" />
          <path d="M18 46L41 69H20Q18 69 18 67Z" />
        </g>
      </>
    ),
  },
  {
    name: "keynote",
    art: (
      <>
        <Tile id="kn" from="#5cc3f9" to="#2f62ea" />
        <path d="M44 39V72" stroke="#dfe5ec" strokeWidth="4.500" />
        <rect x="30" y="71" width="28" height="4" rx="1.500" fill="#e4e9ef" />
        <path d="M24 13H64L70 37Q70 39 68 39H20Q18 39 18 37Z" fill="#f4f6f9" />
        <path d="M21 33H68" stroke="#8aa0b5" strokeWidth="2.500" />
        <circle cx="44" cy="23" r="8" fill="#59b9ea" />
        <path d="M44 23V15A8 8 0 0 0 36 23Z" fill="#9c4fc0" />
        <path d="M44 23H36A8 8 0 0 0 44 31Z" fill="#ef9a3a" />
        <path d="M44 23V31A8 8 0 0 0 52 23Z" fill="#6cc46a" />
      </>
    ),
  },
  {
    name: "pages",
    art: (
      <>
        <Tile id="pg" from="#f6ba47" to="#ee8a38" />
        <path d="M14 74H74" stroke="#fbd9a9" strokeWidth="2.500" />
        <path d="M14 74L17.500 63L66 18.500Q70 15.500 72 17Q73.500 19.500 70 24L23.500 68Z" fill="#fbfbfb" />
        <path d="M39 43L44.500 48.500" stroke="#8b8b8b" strokeWidth="2" />
        <path d="M14 74L16.500 67L20.500 70.500Z" fill="#8b8b8b" />
      </>
    ),
  },
  {
    name: "chrome", running: true,
    art: (
      <>
        <Tile id="ch" from="#f7f7f8" to="#e7e8ea" />
        <path d="M11.100 25A37.500 37.500 0 0 1 76.100 25H43.600V44H22Z" fill="#db4c3f" />
        <path d="M76.100 25A37.500 37.500 0 0 1 43.600 81.200L60 53.200L60 25Z" fill="#f6c444" />
        <path d="M11.100 25A37.500 37.500 0 0 0 43.600 81.200L60 53.200L44 50L27.300 53Z" fill="#4ca352" />
        <path d="M43 25H76.100L60 53Z" fill="#f6c444" />
        <circle cx="43.600" cy="43.700" r="18.700" fill="#fff" />
        <circle cx="43.600" cy="43.700" r="15" fill="#4a80ec" />
      </>
    ),
  },
  {
    name: "word", running: true,
    art: (
      <>
        {TILE}
        <rect x="23" y="15" width="50" height="57.500" rx="2" fill="#5ba0e9" />
        <rect x="23" y="29.300" width="50" height="14.500" fill="#3c79cf" />
        <rect x="23" y="43.700" width="50" height="14" fill="#2b57b8" />
        <path d="M23 57.700H73V70.500Q73 72.500 71 72.500H25Q23 72.500 23 70.500Z" fill="#1d3d8c" />
        <OfficeBadge letter="W" x={8} fill="#2453b4" />
      </>
    ),
  },
  {
    name: "powerpoint",
    art: (
      <>
        {TILE}
        <circle cx="46" cy="43.500" r="29" fill="#e3764f" />
        <path d="M46 14.500A29 29 0 0 1 75 43.500H46Z" fill="#f09473" />
        <path d="M17 43.500A29 29 0 0 0 75 43.500Z" fill="#c35334" />
        <OfficeBadge letter="P" x={11} fill="#b93e21" />
      </>
    ),
  },
  {
    name: "excel",
    art: (
      <>
        {TILE}
        <rect x="23" y="15" width="49" height="57.500" rx="2" fill="#4aa166" />
        <path d="M47.500 15H70Q72 15 72 17V29.300H47.500Z" fill="#62c385" />
        <rect x="23" y="29.300" width="24.500" height="14.500" fill="#36834c" />
        <rect x="47.500" y="29.300" width="24.500" height="14.500" fill="#4aa166" />
        <rect x="47.500" y="43.700" width="24.500" height="14" fill="#36763f" />
        <rect x="23" y="43.700" width="24.500" height="14" fill="#2b5f38" />
        <path d="M23 57.700H72V70.500Q72 72.500 70 72.500H25Q23 72.500 23 70.500Z" fill="#2b5a38" />
        <OfficeBadge letter="X" x={8} fill="#2e7a43" />
      </>
    ),
  },
  {
    name: "outlook",
    art: (
      <>
        {TILE}
        <rect x="26" y="15" width="44" height="50" rx="2" fill="#2d74cf" />
        <rect x="26" y="15" width="44" height="8" fill="#24549f" />
        <rect x="41" y="23" width="14" height="14" fill="#50a2e2" />
        <rect x="55" y="23" width="15" height="14" fill="#7ad6fb" />
        <rect x="55" y="37" width="15" height="13" fill="#50a2e2" />
        <path d="M23 46L48 60L72 44V70Q72 72.500 70 72.500H25Q23 72.500 23 70Z" fill="#52aae6" />
        <path d="M23 46L72 72.500H25Q23 72.500 23 70Z" fill="#67b9ee" />
        <path d="M36 50H58L48 58Z" fill="#2660ab" />
        <OfficeBadge letter="O" x={8} fill="#2d6fd0" />
      </>
    ),
  },
  {
    name: "appstore",
    art: (
      <>
        <Tile id="as" from="#4fb2ef" to="#2d5fdc" />
        <g stroke="#f5f8fc" strokeWidth="6.500" strokeLinecap="round">
          <path d="M47.500 20L29 52M38.500 20L66 67M16.500 54H70.500M24 62L21.500 67" />
        </g>
      </>
    ),
  },
  {
    name: "settings",
    art: (
      <>
        <Tile id="st" from="#dde7ef" to="#8f8c89" />
        <circle cx="44" cy="44" r="38" fill="#232323" />
        <circle cx="44" cy="44" r="34.500" fill="none" stroke="#b9b9b9" strokeWidth="3.500" strokeDasharray="1.800 1.400" />
        <circle cx="44" cy="44" r="31.500" fill="none" stroke="#a9a9a9" strokeWidth="3" />
        <circle cx="44" cy="44" r="25" fill="#3a3a3a" stroke="#8a8a8a" strokeWidth="3" strokeDasharray="2 1.500" />
        <circle cx="44" cy="44" r="22" fill="#3f3f3f" stroke="#a5a5a5" strokeWidth="3" />
        <path d="M44 44H76M44 44L28 16.500M44 44L28 71.500" stroke="#bcbcbc" strokeWidth="4" />
        <circle cx="44" cy="44" r="9" fill="#4a4a4a" stroke="#b0b0b0" strokeWidth="2.500" />
        <circle cx="44" cy="44" r="3" fill="#c5c5c5" />
      </>
    ),
  },
];

const DOCK_EXTRAS: { name: string; running?: boolean; art: React.ReactNode }[] = [
  { name: "league", art: <LeagueIcon fill="#0e2740" id="lg1" /> },
  {
    name: "league-client",
    art: (
      <LeagueIcon fill="#12506a" id="lg2">
        <path d="M44 66Q72 58 68 30Q78 52 62 66Q54 74 42 72Z" fill="#2fa3ad" opacity=".8" />
        <path d="M46 14Q66 22 62 40Q56 50 44 48Q60 40 46 14Z" fill="#277b92" opacity=".8" />
        <path d="M8 60Q14 48 10 34Q18 46 15 66Z" fill="#2fa3ad" opacity=".7" />
      </LeagueIcon>
    ),
  },
  {
    name: "fist", running: true,
    art: (
      <>
        <circle cx="42.500" cy="44" r="54" fill="#d92d33" />
        <FistShape fill="#f5f5f3" />
      </>
    ),
  },
  {
    name: "preview",
    art: (
      <>
        <rect width="88" height="88" rx="17" fill="#f1f2f3" />
        <rect x="7" y="7" width="74" height="74" rx="9" fill="#9cbcec" />
        <rect x="7" y="47" width="74" height="16" fill="#2a3f86" />
        <path d="M7 60L20 57L34 62L46 60V81H16Q7 81 7 72Z" fill="#c3d6e6" />
        <path d="M14 60L22 56L30 62L40 64L34 70L24 66ZM16 78L24 72L36 80Z" fill="#5d4c42" />
        <path d="M46 62H81L89 86Q88 92 82 92H46Q38 92 38 86Z" fill="#d9dee1" stroke="#80868a" strokeWidth="1.500" />
        <path d="M43 83L60 77L85 84Q84 90 78 90H48Q43 90 43 83Z" fill="#ffffff" />
        <path d="M53 70L58 65L61 72L56 76ZM65 72L69 67L72 74Z" fill="#8d959a" />
        <rect x="44" y="43" width="39" height="19" rx="5" fill="#0c0c0c" />
        <ellipse cx="63.500" cy="46" rx="18" ry="3.500" fill="#333" />
      </>
    ),
  },
];

function DockItem({ running, children }: { running?: boolean } & Kids) {
  return (
    <span className="relative size-[88px] shrink-0">
      <svg className="size-[88px] overflow-visible" viewBox="0 0 88 88">{children}</svg>
      {running && <span className="absolute top-[106px] left-10 size-2 rounded-full bg-[#9fb0bf]" />}
    </span>
  );
}

function Dock() {
  return (
    <div className="relative mt-1 ml-[98px] flex h-[138px] w-[2684px] items-start rounded-[42px] border-2 border-[#435564] bg-linear-to-r from-[#16222f] via-[#1b3040] to-[#26383f] pt-[18px] pl-[18.500px]">
      <div className="flex gap-[28.660px]">
        {DOCK_APPS.map((a) => (
          <DockItem key={a.name} running={a.running}>{a.art}</DockItem>
        ))}
      </div>
      <span className="ml-10 h-[102px] w-[2px] bg-[#4e636f]" />
      <div className="ml-[40px] flex gap-[28.500px]">
        {DOCK_EXTRAS.map((a) => (
          <DockItem key={a.name} running={a.running}>{a.art}</DockItem>
        ))}
      </div>
      <span className="ml-[39px] h-[102px] w-[2px] bg-[#4e636f]" />
      <div className="ml-[38px] flex gap-[28px]">
        <DockItem>
          <path d="M10 4L16 -8H50L72 0V90H10Z" fill="#b9b9b9" />
          <rect x="15" y="3" width="63" height="91" fill="#fbfbfb" />
          <path d="M10 4V93H15V3Z" fill="#2b2b2b" />
          <path d="M18 -7H52L56 3H18Z" fill="#ededed" />
          <path d="M20 12H56M20 17H54M20 22H56M20 27H30M20 32H68M20 37H56M20 44H69M20 49H68M20 54H54M20 60H69M20 65H68M20 70H69M20 75H66M20 80H68" stroke="#a2a2a2" strokeWidth="1.500" />
          <path d="M54 -2L76 28L54 27Z" fill="#d9d9d9" />
          <path d="M54 -3H60L78 26V3H70V-2Z" fill="#f1f1f1" />
        </DockItem>
        <DockItem>
          <defs>
            <linearGradient id="tr" x1="0" x2="1">
              <stop offset="0" stopColor="#8a8f93" />
              <stop offset=".35" stopColor="#5f6569" />
              <stop offset=".75" stopColor="#777d80" />
              <stop offset="1" stopColor="#9aa0a3" />
            </linearGradient>
          </defs>
          <path d="M6 4H82L71 84Q70 91 60 91H28Q19 91 18 84Z" fill="url(#tr)" />
          <ellipse cx="44" cy="5" rx="38" ry="9" fill="#4a4f53" stroke="#aeb3b6" strokeWidth="1.500" />
          <path d="M12 6L18 -4L28 -8L36 -2L44 -7L50 0L60 -7L66 -2L74 0L76 8L60 13H28Z" fill="#e6e7e8" />
          <path d="M18 6L26 0L30 8L24 12Z" fill="#5c3a30" />
          <path d="M50 2L56 -3L58 8L52 12Z" fill="#3b58a0" />
          <path d="M34 2L42 0L40 6Z" fill="#27b5c4" />
          <path d="M42 4L48 2L46 12L40 12Z" fill="#c46a3a" />
          <path d="M60 4L68 0L70 8Z" fill="#8d9094" />
        </DockItem>
      </div>
    </div>
  );
}

/* Night sea: layered noise over a dark gradient. */
function Wallpaper() {
  return (
    <svg className="absolute inset-x-0 bottom-0 h-[200px] w-full" viewBox="0 0 2880 200" preserveAspectRatio="none">
      <defs>
        <linearGradient id="sea" x1="0" x2="1">
          <stop offset="0" stopColor="#040b1a" />
          <stop offset=".45" stopColor="#071827" />
          <stop offset="1" stopColor="#0d1e27" />
        </linearGradient>
        <linearGradient id="shade" x1="0" x2="1">
          <stop offset="0" stopColor="#050d22" stopOpacity=".6" />
          <stop offset=".4" stopColor="#050d22" stopOpacity="0" />
        </linearGradient>
        <filter id="waves" x="0" y="0" width="100%" height="100%">
          <feTurbulence type="fractalNoise" baseFrequency="0.05 0.22" numOctaves="4" seed="7" />
          <feColorMatrix values="0 0 0 0 .3  0 0 0 0 .48  0 0 0 0 .62  2.6 0 0 0 -1.250" />
        </filter>
      </defs>
      <rect width="2880" height="200" fill="url(#sea)" />
      <g transform="rotate(-24 1440 100)">
        <rect x="-200" y="-800" width="3300" height="1800" filter="url(#waves)" opacity=".5" />
      </g>
      <rect width="2880" height="200" fill="url(#shade)" />
    </svg>
  );
}

export default function App() {
  return (
    <div className="relative h-[1800px] w-[2880px] overflow-hidden bg-[#0a1622] font-[Inter,'Noto_Sans_CJK_SC',sans-serif]">
      <Wallpaper />
      <div className="relative flex h-full flex-col">
        <MenuBar />
        <div className="bg-linear-to-b from-[#7fb2dc] from-[40px] to-transparent to-[40px] pt-[2px]">
          <BrowserWindow />
        </div>
        <Dock />
      </div>
    </div>
  );
}
